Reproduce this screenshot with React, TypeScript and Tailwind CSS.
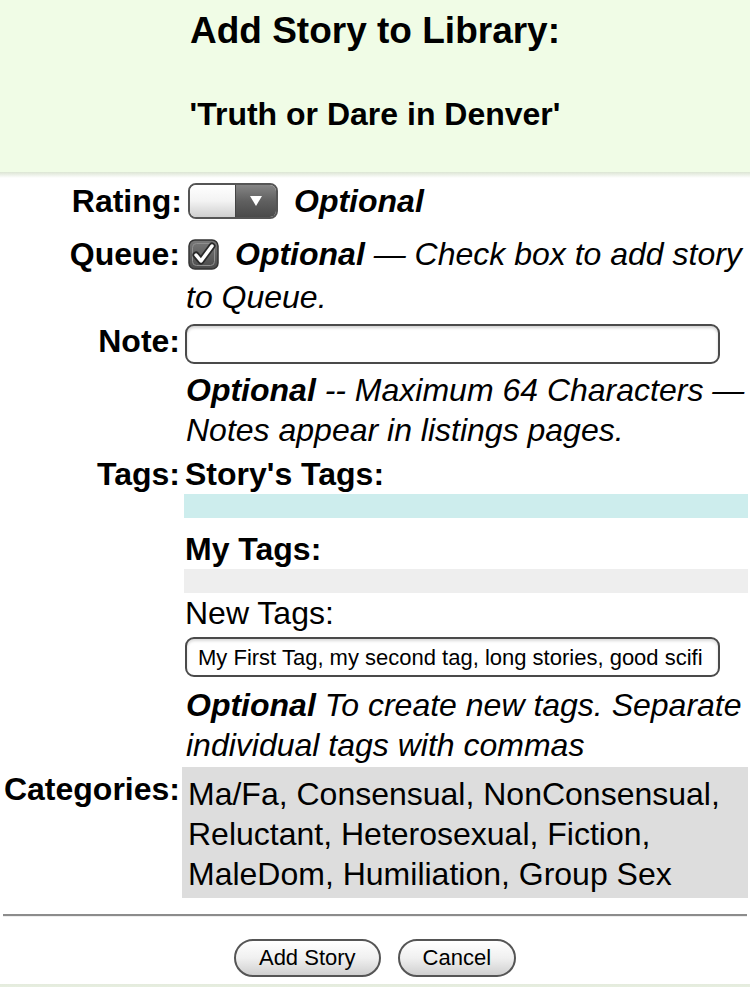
import React from "react";

function SelectBox() {
  return (
    <div className="ml-[6px] flex h-[36px] w-[90px] overflow-hidden rounded-[8px] border-2 border-[#555555]">
      <div className="flex-1 bg-gradient-to-b from-[#ffffff] via-[#f3f3f3] to-[#cfcfcf]" />
      <div className="flex w-[41px] items-center justify-center border-l border-[#444444] bg-gradient-to-b from-[#858585] via-[#606060] to-[#4a4a4a]">
        <svg width="14" height="12" viewBox="0 0 14 12">
          <path d="M1 1 L13 1 L7 11 Z" fill="#ffffff" />
        </svg>
      </div>
    </div>
  );
}

function CheckBox() {
  return (
    <svg width="31" height="31" viewBox="0 0 31 31" className="ml-[6px]">
      <defs>
        <linearGradient id="cbg" x1="0" y1="0" x2="0" y2="1">
          <stop offset="0" stopColor="#7a7a7a" />
          <stop offset="1" stopColor="#4a4a4a" />
        </linearGradient>
      </defs>
      <rect x="1" y="1" width="29" height="29" rx="6" fill="url(#cbg)" stroke="#333333" strokeWidth="1.5" />
      <rect x="4.5" y="4.5" width="22" height="22" rx="4" fill="none" stroke="#8f8f8f" strokeWidth="1" />
      <path d="M8 16 L13 22 L24 7" fill="none" stroke="#2a2a2a" strokeWidth="7" strokeLinecap="round" strokeLinejoin="round" />
      <path d="M8 16 L13 22 L24 7" fill="none" stroke="#ffffff" strokeWidth="3.5" strokeLinecap="round" strokeLinejoin="round" />
    </svg>
  );
}

export default function App() {
  const font = { fontFamily: '"Liberation Sans", Arial, Helvetica, sans-serif' };
  return (
    <div className="w-[750px] bg-white text-black" style={font}>
      {/* Header */}
      <div className="bg-[#f0fce6] pb-[39px] pt-[9px] text-center">
        <h3 className="text-[37px] font-bold leading-[43px]">Add Story to Library:</h3>
        <h4 className="mt-[44px] text-[32px] font-bold leading-[37px]">'Truth or Dare in Denver'</h4>
      </div>
      <div className="h-[6px] bg-gradient-to-b from-[#dce5d4] to-[#ffffff]" />

      {/* Rating */}
      <div className="mt-[3px] flex h-[40px] items-center pr-[2px]">
        <div className="w-[182px] pr-[0px] text-right text-[32px] font-bold leading-[40px]">Rating:</div>
        <div className="flex items-center">
          <SelectBox />
          <span className="ml-[16px] text-[32px] font-bold italic leading-[40px]">Optional</span>
        </div>
      </div>

      {/* Queue */}
      <div className="mt-[11px] flex pr-[2px]">
        <div className="w-[182px] pr-[2px] text-right text-[32px] font-bold leading-[44px]">Queue:</div>
        <div className="flex-1 text-[32px] italic">
          <div className="flex h-[44px] items-center">
            <CheckBox />
            <span className="ml-[16px] leading-[44px] whitespace-nowrap">
              <span className="font-bold">Optional</span> — Check box to add story
            </span>
          </div>
          <div className="pl-[4px] leading-[42px]">to Queue.</div>
        </div>
      </div>

      {/* Note */}
      <div className="flex pr-[2px]">
        <div className="w-[182px] pr-[2px] pt-[3px] text-right text-[32px] font-bold leading-[40px]">Note:</div>
        <div className="flex-1">
          <div className="ml-[3px] mt-[6px] h-[40px] w-[535px] rounded-[9px] border-2 border-[#4a4a4a] bg-white shadow-[inset_0_2px_3px_rgba(0,0,0,0.18)]" />
          <div className="mt-[6px] pl-[4px] text-[32px] italic leading-[40px] whitespace-nowrap">
            <span className="font-bold">Optional</span> -- Maximum 64 Characters —
            <br />
            Notes appear in listings pages.
          </div>
        </div>
      </div>

      {/* Tags */}
      <div className="mt-[4px] flex pr-[2px]">
        <div className="w-[182px] pr-[2px] text-right text-[32px] font-bold leading-[40px]">Tags:</div>
        <div className="flex-1">
          <div className="pl-[3px] text-[32px] font-bold leading-[40px]">Story's Tags:</div>
          <div className="ml-[2px] h-[24px] bg-[#cdeded]" />
          <div className="mt-[11px] pl-[3px] text-[32px] font-bold leading-[40px]">My Tags:</div>
          <div className="ml-[2px] h-[24px] bg-[#eeeeee]" />
          <div className="pl-[3px] text-[32px] leading-[40px]">New Tags:</div>
          <div className="ml-[3px] mt-[4px] flex h-[40px] w-[535px] items-center rounded-[9px] border-2 border-[#4a4a4a] bg-white pl-[11px] text-[22px] shadow-[inset_0_2px_3px_rgba(0,0,0,0.15)] whitespace-nowrap">
            My First Tag, my second tag, long stories, good scifi
          </div>
          <div className="mt-[8px] pl-[4px] text-[32px] italic leading-[40px] whitespace-nowrap">
            <span className="font-bold">Optional</span> To create new tags. Separate
            <br />
            individual tags with commas
          </div>
        </div>
      </div>

      {/* Categories */}
      <div className="mt-[2px] flex pr-[2px]">
        <div className="w-[182px] pr-[2px] pt-[2px] text-right text-[32px] font-bold leading-[40px]">Categories:</div>
        <div className="flex-1 bg-[#dddddd] px-[6px] pb-[4px] pt-[7px] text-[32px] leading-[40px]">
          Ma/Fa, Consensual, NonConsensual, Reluctant, Heterosexual, Fiction, MaleDom, Humiliation, Group Sex
        </div>
      </div>

      {/* hr */}
      <div className="mx-[3px] mt-[16px] border-t-2 border-[#8c8c8c]" />
      <div className="mx-[3px] h-[1px] bg-[#eeeeee]" />

      {/* Buttons */}
      <div className="mt-[22px] flex justify-center gap-[17px]">
        <button className="h-[38px] rounded-full border-2 border-[#555555] bg-gradient-to-b from-[#ffffff] via-[#f0f0f0] to-[#d0d0d0] px-[23px] text-[22px] leading-[34px] text-black">
          Add Story
        </button>
        <button className="h-[38px] rounded-full border-2 border-[#555555] bg-gradient-to-b from-[#ffffff] via-[#f0f0f0] to-[#d0d0d0] px-[23px] text-[22px] leading-[34px] text-black">
          Cancel
        </button>
      </div>

      <div className="mt-[7px] h-[12px] bg-gradient-to-b from-[#e4ebdd] to-[#eef8e7]" />
    </div>
  );
}
